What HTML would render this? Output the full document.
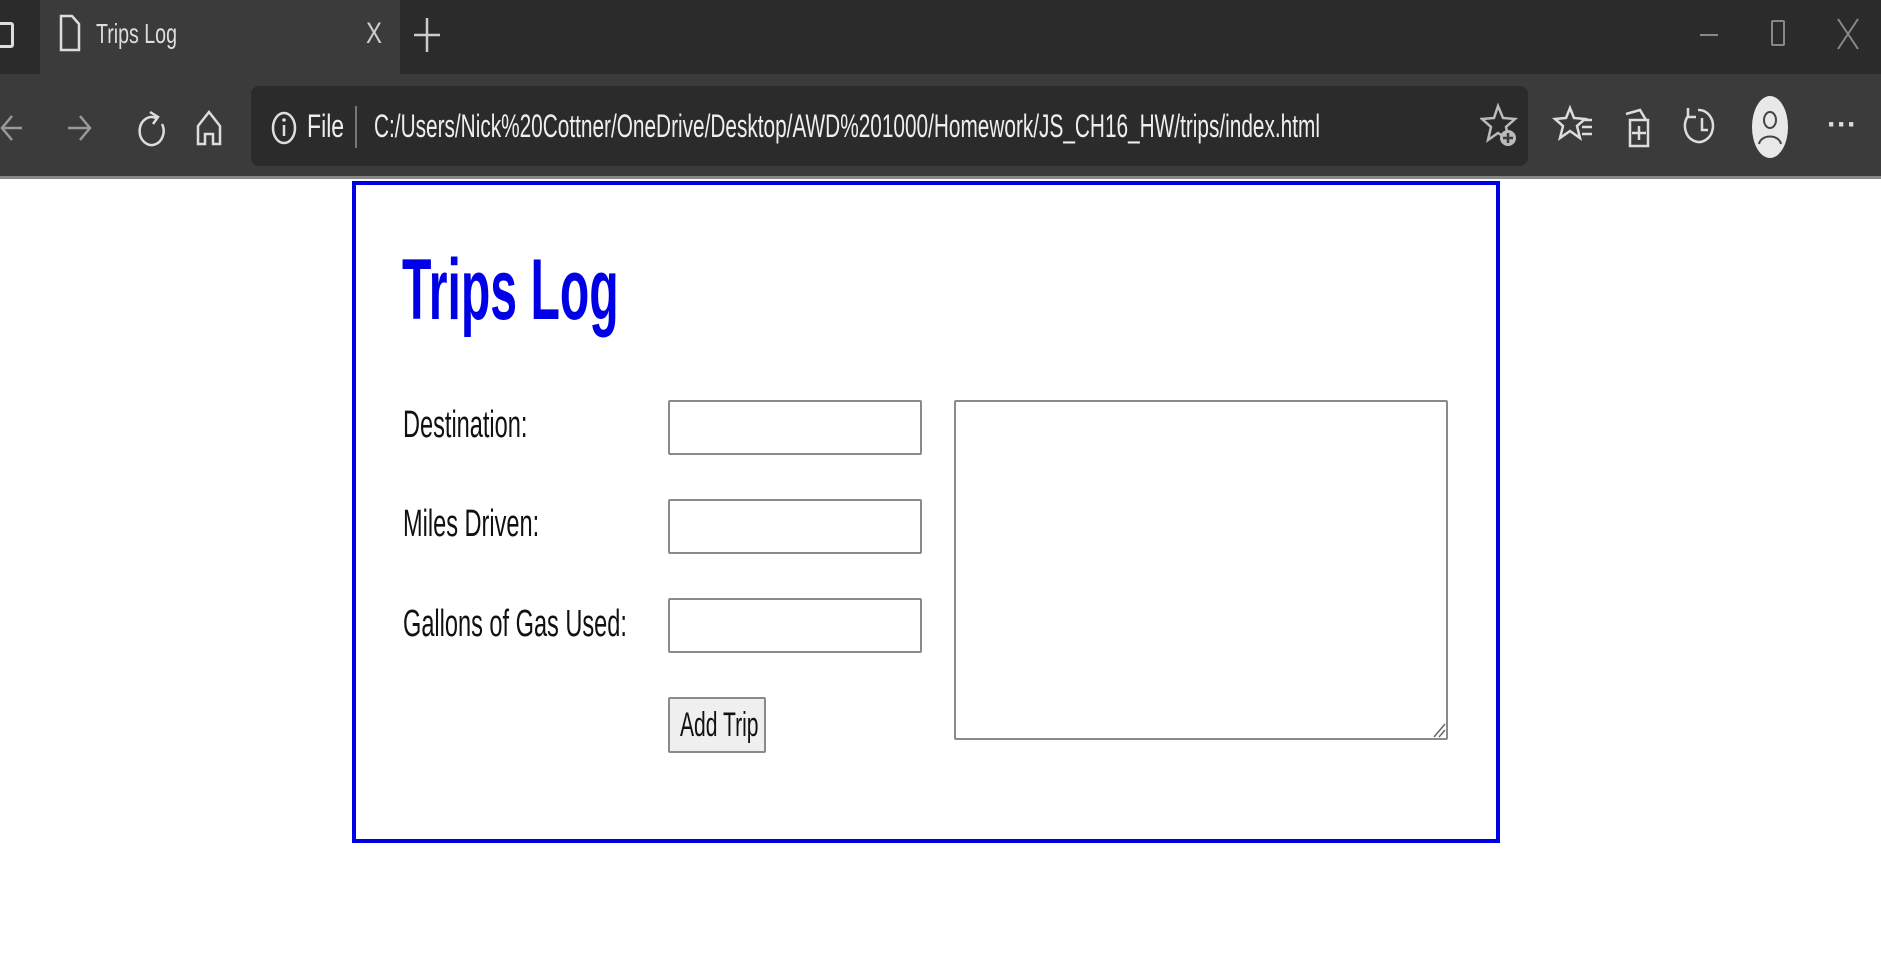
<!DOCTYPE html>
<html><head><meta charset="utf-8"><style>
*{margin:0;padding:0;box-sizing:border-box}
body{width:1881px;height:966px;background:#fff;position:relative;overflow:hidden;font-family:"Liberation Sans",Arial,sans-serif}
.a{position:absolute}
.c{transform-origin:0 50%;white-space:nowrap}
</style></head><body>
<div class="a" style="left:0;top:0;width:1881px;height:74px;background:#2b2b2b"></div>
<div class="a" style="left:40px;top:0;width:360px;height:74px;background:#3b3b3b"></div>
<div class="a" style="left:-6px;top:22px;width:20px;height:26px;border:3px solid #ddd;border-radius:3px"></div>
<svg class="a" style="left:58px;top:14px" width="24" height="38" viewBox="0 0 24 38"><path d="M3 2h11l7 8v26H3z" fill="none" stroke="#ddd" stroke-width="2.5"/></svg>
<div class="a c" style="left:96px;top:18px;font-size:28px;color:#ddd;transform:scaleX(.7)">Trips Log</div>
<div class="a c" style="left:366px;top:17px;font-size:30px;color:#ccc;transform:scaleX(.8)">X</div>
<svg class="a" style="left:412px;top:16px" width="30" height="38"><path d="M15 2v34M2 19h26" stroke="#ccc" stroke-width="2.5"/></svg>
<div class="a" style="left:1700px;top:34px;width:18px;height:2px;background:#888"></div>
<div class="a" style="left:1771px;top:20px;width:14px;height:26px;border:2px solid #888;border-radius:2px"></div>
<svg class="a" style="left:1836px;top:17px" width="24" height="34"><path d="M2 2l20 30M22 2L2 32" stroke="#888" stroke-width="2"/></svg>
<div class="a" style="left:0;top:74px;width:1881px;height:104px;background:#3b3b3b"></div>
<div class="a" style="left:0;top:176px;width:1881px;height:3px;background:#888"></div>
<div class="a" style="left:251px;top:86px;width:1277px;height:80px;background:#2b2b2b;border-radius:8px"></div>
<svg class="a" style="left:0;top:106px" width="260" height="44" fill="none" stroke="#999" stroke-width="2.5">
<path d="M22 22H2M12 10L2 22l10 12"/><path d="M68 22h22M80 10l10 12-10 12" stroke="#999"/>
<path d="M156 12a12 14 0 1 0 6 6M150 6l8 5-5 7" stroke="#ddd"/>
<path d="M198 38V20l11-14 11 14v18h-7v-10h-8v10z" stroke="#ddd"/>
</svg>
<svg class="a" style="left:270px;top:110px" width="28" height="36"><ellipse cx="14" cy="18" rx="11" ry="15" fill="none" stroke="#ddd" stroke-width="2.5"/><path d="M14 15v11" stroke="#ddd" stroke-width="2.5"/><circle cx="14" cy="10" r="1.8" fill="#ddd"/></svg>
<div class="a c" style="left:307px;top:108px;font-size:32px;color:#eee;transform:scaleX(.72)">File</div>
<div class="a" style="left:355px;top:106px;width:2px;height:42px;background:#777"></div>
<div class="a c" style="left:374px;top:108px;font-size:32px;color:#eee;transform:scaleX(.65)">C:/Users/Nick%20Cottner/OneDrive/Desktop/AWD%201000/Homework/JS_CH16_HW/trips/index.html</div>
<svg class="a" style="left:1480px;top:100px" width="400" height="60" fill="none" stroke="#ddd" stroke-width="2.5">
<path d="M18 6l5 12 12 1-9 8 3 13-11-7-10 7 3-13-9-8 12-1z" stroke="#bbb"/><circle cx="28" cy="38" r="8" fill="#bbb" stroke="none"/><path d="M28 33v10M23 38h10" stroke="#3b3b3b"/>
<path d="M90 8l4 10 11 1-8 7 3 12-10-7-10 7 3-12-8-7 11-1z"/><path d="M102 20h10M102 27h10M102 34h10"/>
<path d="M146 14l14-4 6 10M150 20h18v26h-18z"/><path d="M159 26v14M152 33h14"/>
<path d="M218 10a14 16 0 1 1-10 6M208 8v9h8M222 18v12h6"/>
</svg>
<div class="a" style="left:1752px;top:96px;width:36px;height:62px;border-radius:50%;background:#e8e8e8"></div>
<svg class="a" style="left:1752px;top:106px" width="36" height="44" fill="none" stroke="#444" stroke-width="2"><ellipse cx="18" cy="14" rx="6" ry="8"/><path d="M7 38c2-10 20-10 22 0"/></svg>
<div class="a c" style="left:1827px;top:108px;font-size:30px;color:#ddd;font-weight:bold">···</div>

<div class="a" style="left:352px;top:181px;width:1148px;height:662px;border:4px solid #0000e6"></div>
<div class="a c" style="left:402px;top:290px;font-size:86px;font-weight:bold;color:#0000e6;transform:scaleX(.56);line-height:1;margin-top:-43px">Trips Log</div>
<div class="a c" style="left:403px;top:425px;font-size:38px;color:#111;transform:scaleX(.62);line-height:1;margin-top:-19px">Destination:</div>
<div class="a c" style="left:403px;top:524px;font-size:38px;color:#111;transform:scaleX(.62);line-height:1;margin-top:-19px">Miles Driven:</div>
<div class="a c" style="left:403px;top:624px;font-size:38px;color:#111;transform:scaleX(.62);line-height:1;margin-top:-19px">Gallons of Gas Used:</div>
<div class="a" style="left:668px;top:400px;width:254px;height:55px;border:2px solid #8a8a8a;border-radius:2px"></div>
<div class="a" style="left:668px;top:499px;width:254px;height:55px;border:2px solid #8a8a8a;border-radius:2px"></div>
<div class="a" style="left:668px;top:598px;width:254px;height:55px;border:2px solid #8a8a8a;border-radius:2px"></div>
<div class="a" style="left:668px;top:697px;width:98px;height:56px;border:2px solid #8a8a8a;border-radius:2px;background:#efefef"></div>
<div class="a c" style="left:680px;top:725px;font-size:34px;color:#111;transform:scaleX(.62);line-height:1;margin-top:-17px">Add Trip</div>
<div class="a" style="left:954px;top:400px;width:494px;height:340px;border:2px solid #8a8a8a;border-radius:2px"></div>
<svg class="a" style="left:1432px;top:722px" width="14" height="16"><path d="M2 15L13 2M7 15L13 8" stroke="#666" stroke-width="1.5"/></svg>
</body></html>
